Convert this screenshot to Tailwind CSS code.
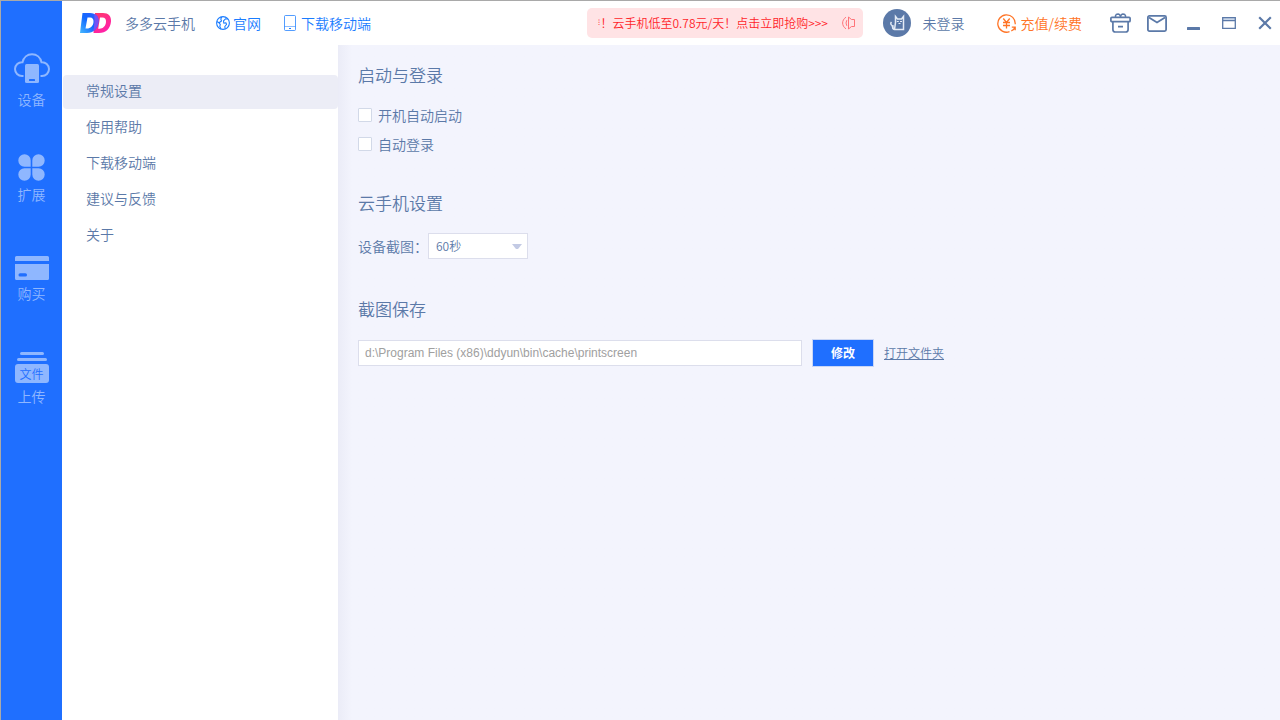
<!DOCTYPE html>
<html lang="zh-CN">
<head>
<meta charset="utf-8">
<meta name="viewport" content="width=device-width, initial-scale=1">
<title>多多云手机</title>
<script src="https://cdn.jsdelivr.net/npm/@tailwindcss/browser@4"></script>
</head>
<body class="flex h-screen overflow-hidden border-t border-l border-[#a9a9a9] bg-white font-['Noto_Sans_CJK_SC',sans-serif] text-sm leading-5 font-[350] text-[#5b79a8]">

<nav class="flex w-[61px] shrink-0 flex-col items-center bg-[#1f6fff] pt-[52px] text-[#8fb7ff]" aria-label="主导航">
  <button type="button" class="flex flex-col items-center gap-1">
    <svg class="h-8 w-9" viewBox="0 0 36 32" fill="none" aria-hidden="true">
      <path d="M9.500 23H8A7 7 0 0 1 1 16A6.900 6.900 0 0 1 8.500 9.200C9.500 4.500 13.300 1.200 18 1.200C22.700 1.200 26.500 4.500 27.500 9.200A6.900 6.900 0 0 1 35 16A7 7 0 0 1 28 23H26.500" stroke="currentColor" stroke-width="2"/>
      <rect x="11" y="11" width="14" height="19" rx="1.500" fill="currentColor"/>
      <rect x="15" y="26" width="6" height="2" rx=".5" fill="#1f6fff"/>
    </svg>
    <span>设备</span>
  </button>
  <button type="button" class="mt-[45px] flex flex-col items-center gap-[3px]">
    <svg class="size-[27px]" viewBox="0 0 27 27" fill="currentColor" aria-hidden="true">
      <path d="M12.700 12.700H6.500A6.200 6.200 0 1 1 12.700 6.500ZM14.300 12.700V6.500A6.200 6.200 0 1 1 20.500 12.700ZM12.700 14.300V20.500A6.200 6.200 0 1 1 6.500 14.300ZM14.300 14.300H20.500A6.200 6.200 0 1 1 14.300 20.500Z"/>
    </svg>
    <span>扩展</span>
  </button>
  <button type="button" class="mt-[52px] flex flex-col items-center gap-[3px]">
    <svg class="h-6 w-[34px]" viewBox="0 0 34 24" fill="currentColor" aria-hidden="true">
      <path d="M1.500 0H32.500Q34 0 34 1.500V5H0V1.500Q0 0 1.500 0ZM0 8H34V22.500Q34 24 32.500 24H1.500Q0 24 0 22.500Z"/>
      <rect x="3.500" y="17.200" width="8.500" height="3.400" rx="1.600" fill="#1f6fff"/>
    </svg>
    <span>购买</span>
  </button>
  <button type="button" class="mt-[49px] flex flex-col items-center gap-[3px]">
    <span class="flex w-[34px] flex-col items-center gap-[3px]">
      <span class="h-[3px] w-6 rounded-full bg-current"></span>
      <span class="h-[3px] w-[30px] rounded-full bg-current"></span>
      <span class="flex h-[19px] w-full items-center justify-center rounded-[3px] bg-[#8fb7ff] text-xs text-[#1f6fff]">文件</span>
    </span>
    <span>上传</span>
  </button>
</nav>

<div class="flex min-w-0 flex-1 flex-col">
  <header class="flex h-11 shrink-0 items-center pl-[18px] pr-2">
    <svg class="h-[21px] w-8 shrink-0" viewBox="0 0 32 21" fill="none" aria-label="DD">
      <defs>
        <linearGradient id="blue" x1="0" y1="1" x2="1" y2="0"><stop offset="0" stop-color="#45b8ff"/><stop offset=".5" stop-color="#1268ff"/><stop offset="1" stop-color="#315cff"/></linearGradient>
        <linearGradient id="pink" x1="0" y1="0" x2=".6" y2="1"><stop offset="0" stop-color="#ff3a68"/><stop offset="1" stop-color="#ff20aa"/></linearGradient>
      </defs>
      <path fill="url(#pink)" fill-rule="evenodd" d="M15 0H23C28.500 0 31.400 3.400 31 8.500C30.400 15.500 26 20 19 20H13.500ZM20 4.500L18.200 15.700H19.500C23 15.700 25.700 13 26 9C26.200 6 25 4.500 22.400 4.500Z"/>
      <path fill="url(#blue)" fill-rule="evenodd" d="M2.500 0H10C16 0 19 3.500 18.500 8.700C18 15.500 13.500 20 7 20H0ZM7.500 4.500L5.500 15.500H7C10.500 15.500 13.200 13 13.500 9C13.700 6 12.500 4.500 10 4.500Z"/>
      <path fill="#7551f5" d="M14 .8C17.500 2.200 19 5 18.500 8.800C18.100 13.500 16 16.600 12.900 18.500C14.500 14 15 5 14 .8Z"/>
    </svg>
    <h1 class="ml-[13px] shrink-0">多多云手机</h1>
    <a href="#" class="ml-[21px] flex shrink-0 items-center gap-[3px] text-[#1a7cff]">
      <svg class="size-3.5" viewBox="0 0 14 14" fill="none" stroke="currentColor" stroke-width="1.100" stroke-linejoin="round" aria-hidden="true">
        <circle cx="7" cy="7" r="6.400"/>
        <path d="M.8 5.500L3 6.800L5.500 5L4.800 3L5.800 1M3 6.800L4.300 8.300L3.800 10.500L5 13M12 3L9.500 2.800L7.500 4.800L7.800 7.200L10 6.800L10.500 8.500L8.800 10.500L9.200 12.800"/>
      </svg>
      官网
    </a>
    <a href="#" class="ml-[23px] flex shrink-0 items-center gap-[5px] text-[#1a7cff]">
      <svg class="h-4 w-3" viewBox="0 0 12 16" fill="none" stroke="currentColor" aria-hidden="true">
        <rect x=".5" y=".5" width="11" height="15" rx="1" stroke-opacity=".75"/><path d="M.5 11.500H11.500" stroke-opacity=".5"/><path d="M5 13.500H7"/>
      </svg>
      下载移动端
    </a>

    <a href="#" class="ml-auto flex h-[30px] w-[276px] shrink-0 items-center rounded-[5px] bg-[#ffe3e5] pr-2 pl-[11px] text-xs text-[#ff1f2a]">
      <span class="flex items-center whitespace-nowrap"><span class="w-[3px] font-['DejaVu_Sans',sans-serif] text-[8px] leading-3">⁝</span>！云手机低至0.78元/天！点击立即抢购&gt;&gt;&gt;</span>
      <svg class="ml-auto h-3.5 w-[13px] shrink-0 text-[#ff7378]" viewBox="0 0 13 14" fill="none" stroke="currentColor" aria-hidden="true">
        <path d="M6.500 1V13L9.500 10.500H12.500V3.500H9.500ZM4.800 4.200Q3.200 7 4.800 9.800M4 1.200C-.5 4 -.5 10 4 12.800"/>
      </svg>
    </a>
    <button type="button" class="ml-5 flex shrink-0 items-center gap-3">
      <svg class="size-7" viewBox="0 0 28 28" fill="none" aria-hidden="true">
        <circle cx="14" cy="14" r="14" fill="#5b79a8"/>
        <path d="M11.500 20.500H20.500V7.500L18.500 10H14.500L12.500 7.500V13.500L11.500 20.500C9 20.500 10 17.500 9 16.500C7.500 15.500 7.500 14 8.500 13" stroke="#e4ebf5" stroke-width="1.500"/>
        <path d="M13.800 12.500H15.800M17 12.500H19M15.500 14.500H17.500M10 16V20" stroke="#e4ebf5" stroke-width="1.200"/>
      </svg>
      未登录
    </button>
    <button type="button" class="ml-8 flex shrink-0 items-center gap-[5px] text-[#ff7426]">
      <svg class="size-[19px]" viewBox="0 0 19 19" fill="none" stroke="currentColor" stroke-width="1.300" aria-hidden="true">
        <path d="M18.200 10.200A8.700 8.700 0 1 0 12.500 17.700M14.300 16.800Q17.300 15.700 18 12.800M14.800 13.200H18.200V16.300"/>
        <path d="M6.300 4.500L9.500 8.500L12.700 4.500M9.500 8.500V14.500M6 8.500H13M6 11.500H13"/>
      </svg>
      充值/续费
    </button>
    <button type="button" class="ml-7 shrink-0" aria-label="礼物">
      <svg class="h-5 w-[21px]" viewBox="0 0 21 20" fill="none" stroke="currentColor" stroke-width="1.700" stroke-linejoin="round" aria-hidden="true">
        <rect x=".9" y="4.300" width="19.200" height="4.400" rx="1"/>
        <path d="M2.900 8.700V16.500Q2.900 19 5.400 19H15.600Q18.100 19 18.100 16.500V8.700M8 13.700H13"/>
        <path d="M5.500 4V2.800Q6 1 8 1Q10 1.100 10.500 3.800Q11 1.100 13 1Q15 1 15.500 2.800V4" stroke-width="1.500"/>
      </svg>
    </button>
    <button type="button" class="ml-4 shrink-0" aria-label="消息">
      <svg class="h-[17px] w-5" viewBox="0 0 20 17" fill="none" stroke="currentColor" stroke-width="1.800" aria-hidden="true">
        <rect x=".9" y=".9" width="18.200" height="15.200" rx="1.500"/><path d="M2 2.500L10 7.500L18 2.500"/>
      </svg>
    </button>
    <button type="button" class="ml-5 shrink-0" aria-label="最小化">
      <svg class="h-3.5 w-[13px]" viewBox="0 0 13 14" aria-hidden="true"><rect y="11" width="13" height="3" rx=".5" fill="currentColor"/></svg>
    </button>
    <button type="button" class="ml-[22px] shrink-0" aria-label="最大化">
      <svg class="h-3 w-3.5" viewBox="0 0 14 12" fill="none" aria-hidden="true"><path d="M1 1H13V3.500H1Z" fill="#c9d6e8"/><path d="M.7 .7H13.300V11.300H.7ZM1 3.700H13" stroke="currentColor" stroke-width="1.300"/></svg>
    </button>
    <button type="button" class="ml-[22px] shrink-0" aria-label="关闭">
      <svg class="size-3.5" viewBox="0 0 14 14" fill="none" aria-hidden="true"><path d="M1.200 1.200L12.800 12.800M12.800 1.200L1.200 12.800" stroke="currentColor" stroke-width="2.200"/></svg>
    </button>
  </header>

  <div class="flex min-h-0 flex-1">
    <aside class="w-[276px] shrink-0 pt-[30px]">
      <ul class="flex flex-col gap-0.5 pl-px">
        <li><a href="#" aria-current="page" class="flex h-[34px] items-center rounded-[4px] bg-[#ecedf6] pb-[5px] pl-[23px]">常规设置</a></li>
        <li><a href="#" class="flex h-[34px] items-center pb-[5px] pl-[23px]">使用帮助</a></li>
        <li><a href="#" class="flex h-[34px] items-center pb-[5px] pl-[23px]">下载移动端</a></li>
        <li><a href="#" class="flex h-[34px] items-center pb-[5px] pl-[23px]">建议与反馈</a></li>
        <li><a href="#" class="flex h-[34px] items-center pb-[5px] pl-[23px]">关于</a></li>
      </ul>
    </aside>

    <main class="min-w-0 flex-1 bg-[#f3f4fd] bg-linear-to-r from-[#ebecf7] to-[#f3f4fd] to-[14px] pt-[18px] pl-5">
      <section>
        <h2 class="text-[17px] leading-6">启动与登录</h2>
        <label class="mt-[18px] flex w-fit items-center gap-1.5">
          <input type="checkbox" class="size-3.5 appearance-none rounded-[1px] border border-[#d2d9e8] bg-white checked:bg-[#1f6fff]">开机自动启动
        </label>
        <label class="mt-[9px] flex w-fit items-center gap-1.5">
          <input type="checkbox" class="size-3.5 appearance-none rounded-[1px] border border-[#d2d9e8] bg-white checked:bg-[#1f6fff]">自动登录
        </label>
      </section>

      <section class="mt-[37px]">
        <h2 class="text-[17px] leading-6">云手机设置</h2>
        <div class="mt-[18px] flex items-center">
          <label for="interval" class="w-[70px]">设备截图：</label>
          <div class="relative">
            <select id="interval" class="block h-[26px] w-[100px] appearance-none border border-[#dcdeec] bg-white pl-[7px] text-xs">
              <option>60秒</option>
            </select>
            <svg class="pointer-events-none absolute top-[11px] right-1.5 h-[5px] w-[10px]" viewBox="0 0 10 5" fill="#c3cae4" aria-hidden="true"><path d="M0 0H10L6 5H4Z"/></svg>
          </div>
        </div>
      </section>

      <section class="mt-[38px]">
        <h2 class="text-[17px] leading-6">截图保存</h2>
        <div class="mt-[18px] flex items-center">
          <input type="text" aria-label="截图保存路径" value="d:\Program Files (x86)\ddyun\bin\cache\printscreen" class="h-[26px] w-[444px] border border-[#dcdeec] bg-white px-1.5 font-['Liberation_Sans',sans-serif] text-xs text-[#a0a0a0]">
          <button type="button" class="ml-2.5 h-7 w-[62px] border border-[#c9d6f5] bg-[#1f6fff] text-xs font-bold text-white">修改</button>
          <a href="#" class="ml-2.5 text-xs underline">打开文件夹</a>
        </div>
      </section>
    </main>
  </div>
</div>
</body>
</html>
